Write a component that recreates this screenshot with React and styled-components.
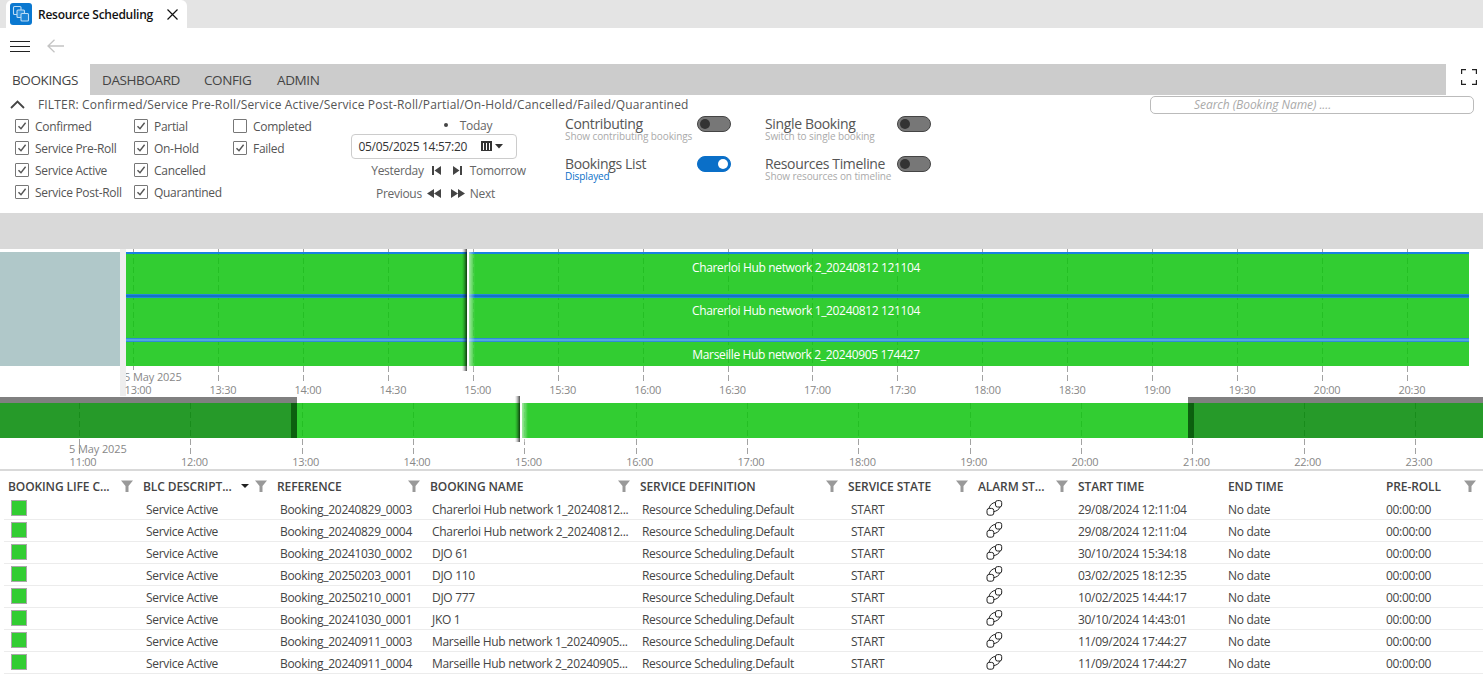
import styled, { createGlobalStyle } from 'styled-components'

const GlobalStyle = createGlobalStyle`
    html, body {
        margin: 0;
        padding: 0;
        background: white;
        overflow: hidden;
    }
    body {
        font-family: "Open Sans", "Noto Sans", sans-serif;
        color: #444;
    }
`

const Page = styled.div`
    width: 1483px;
    height: 695px;
    overflow: hidden;
    display: flex;
    flex-direction: column;
`

const TabStrip = styled.div`
    height: 28px;
    background: #e4e4e4;
    padding-left: 6px;
    display: flex;
`

const WindowTab = styled.div`
    width: 181px;
    height: 28px;
    box-sizing: border-box;
    background: white;
    border-radius: 6px 6px 0 0;
    padding-left: 4px;
    display: flex;
    align-items: center;
    font-size: 12px;
    font-weight: 600;
    letter-spacing: -0.25px;
    color: #111;

    svg { flex: none; }
    span { margin-left: 6px; width: 129px; white-space: nowrap; }
`

const Toolbar = styled.div`
    height: 36px;
    padding-left: 10px;
    display: flex;
    align-items: center;
    gap: 17px;
`

const MenuTabs = styled.div`
    height: 31px;
    display: flex;
    align-items: stretch;
`

const MenuBar = styled.div`
    width: 1356px;
    background: #cccccc;
    display: flex;
`

const MenuTab = styled.div`
    display: flex;
    align-items: center;
    font-size: 13.5px;
    letter-spacing: -0.4px;
    color: #444;
    padding-left: ${p => p.$pad}px;
    width: ${p => p.$width}px;
    box-sizing: border-box;
`

const FullscreenButton = styled.div`
    margin-left: 15px;
    padding-top: 5px;
    display: flex;
    align-items: flex-start;
`

const FilterPanel = styled.div`
    height: 118px;
    box-sizing: border-box;
    display: flex;
    flex-direction: column;
`

const FilterLine = styled.div`
    height: 20px;
    display: flex;
    align-items: flex-start;
    padding-left: 10px;
    font-size: 12px;
    letter-spacing: 0.16px;
    color: #555;

    > svg { margin-top: 5px; flex: none; }
`

const FilterText = styled.span`
    margin-left: 13px;
    margin-top: 1px;
    width: 1112px;
    flex: none;
`

const SearchBox = styled.div`
    width: 324px;
    height: 18px;
    margin-top: 1px;
    box-sizing: border-box;
    border: 1px solid #bbb;
    border-radius: 5px;
    padding-left: 43px;
    font-size: 12px;
    line-height: 16px;
    font-style: italic;
    letter-spacing: -0.05px;
    color: #aaa;
`

const Controls = styled.div`
    display: flex;
    padding-left: 15px;
`

const CheckGrid = styled.div`
    width: 335px;
    display: grid;
    grid-template-columns: 119px 99px auto;
    grid-template-rows: repeat(4, 22px);
    grid-auto-flow: column;
`

const CheckItem = styled.label`
    display: flex;
    align-items: center;
    gap: 6px;
    font-size: 12px;
    letter-spacing: -0.3px;
    color: #555;
`

const CheckBox = styled.span`
    width: 14px;
    height: 14px;
    box-sizing: border-box;
    border: 1px solid #777;
    border-radius: 1px;
    display: flex;
    align-items: center;
    justify-content: center;
`

const DateColumn = styled.div`
    width: 167px;
    padding-top: 1px;
    display: flex;
    flex-direction: column;
    align-items: center;
    font-size: 12px;
    letter-spacing: -0.3px;
    color: #666;
`

const TodayRow = styled.div`
    height: 18px;
    display: flex;
    align-items: center;
    gap: 12px;
    margin-left: 69px;
`

const Dot = styled.span`
    width: 4px;
    height: 4px;
    border-radius: 50%;
    background: #444;
`

const DateInput = styled.div`
    width: 166px;
    height: 25px;
    box-sizing: border-box;
    border: 1px solid #ccc;
    border-radius: 4px;
    padding: 0 13px 0 7px;
    display: flex;
    align-items: center;
    justify-content: space-between;
    color: #333;
`

const NavRow = styled.div`
    height: 23px;
    display: flex;
    align-items: center;
    gap: ${p => p.$gap}px;
    margin-left: ${p => p.$left}px;
`

const NavIcons = styled.span`
    display: flex;
    align-items: center;
    gap: ${p => p.$gap}px;
`

const ToggleGrid = styled.div`
    margin-left: 48px;
    margin-top: 2px;
    display: grid;
    grid-template-columns: 200px 200px;
    grid-template-rows: 40px 40px;
`

const ToggleBlock = styled.div`
    display: flex;
    align-items: flex-start;
`

const ToggleText = styled.div`
    width: 132px;
    flex: none;
`

const ToggleTitle = styled.div`
    font-size: 14px;
    line-height: 14px;
    letter-spacing: -0.35px;
    color: #555;
`

const ToggleHint = styled.div`
    font-size: 10px;
    line-height: 10px;
    letter-spacing: -0.1px;
    white-space: nowrap;
    color: ${p => (p.$on ? '#0a6fc8' : '#aaa')};
`

const Toggle = styled.div`
    width: 34px;
    height: 16px;
    margin-top: -1px;
    box-sizing: border-box;
    border-radius: 8px;
    border: 1.5px solid ${p => (p.$on ? '#0a6fc8' : '#444')};
    background: ${p => (p.$on ? '#0a6fc8' : '#777')};
    display: flex;
    align-items: center;
    justify-content: ${p => (p.$on ? 'flex-end' : 'flex-start')};
    padding: 0 2px;

    &::after {
        content: '';
        width: 10px;
        height: 10px;
        border-radius: 50%;
        background: ${p => (p.$on ? 'white' : '#333')};
    }
`

const GreyBand = styled.div`
    height: 36px;
    background: #d9d9d9;
`

const MainTimeline = styled.div`
    position: relative;
    height: 147px;
    display: flex;
    overflow: hidden;
`

const LeftColumn = styled.div`
    width: 120px;
    padding-top: 3px;
    flex: none;
`

const ResourcePanel = styled.div`
    height: 114px;
    background: #b0c8c9;
`

const Gutter = styled.div`
    width: 6px;
    flex: none;
    background: #eeeeee;
`

/* bars sit above the ticks and let them show through a little */
const Tracks = styled.div`
    position: relative;
    z-index: 1;
    width: 1343px;
    padding-top: 3px;
    flex: none;
`

const TrackRow = styled.div`
    height: ${p => p.$height}px;
    background: rgba(14, 196, 14, 0.85);
    text-align: center;
    font-size: 12px;
    line-height: 16px;
    letter-spacing: -0.35px;
    color: white;
`

const TrackLine = styled.div`
    height: ${p => p.$height}px;
    background: ${p => p.$fill};
`

const TrackLabel = styled.div`
    padding: ${p => p.$pad}px 0 0 17px;
`

const Tick = styled.div`
    position: absolute;
    top: ${p => p.$top}px;
    height: ${p => p.$height}px;
    width: 1px;
    background: repeating-linear-gradient(to bottom, rgba(70, 70, 70, 0.5) 0, rgba(70, 70, 70, 0.5) 6px, transparent 6px, transparent 9px);
`

const AxisLabel = styled.div`
    position: absolute;
    z-index: 1;
    top: ${p => p.$top}px;
    transform: translateX(-50%);
    font-size: 11px;
    line-height: 14px;
    letter-spacing: -0.25px;
    color: #888;
`

const DateLabel = styled.div`
    position: absolute;
    z-index: 1;
    top: ${p => p.$top}px;
    font-size: 11px;
    line-height: 14px;
    letter-spacing: -0.1px;
    color: #888;
    white-space: nowrap;
`

const ClippedDate = styled.div`
    position: absolute;
    z-index: 1;
    left: 126px;
    top: 121px;
    width: 80px;
    height: 26px;
    overflow: hidden;
    background: white;
`

const ClippedText = styled.div`
    margin-left: -2px;
    font-size: 11px;
    line-height: 14px;
    letter-spacing: -0.1px;
    color: #888;
    white-space: nowrap;
`

const Marker = styled.div`
    position: absolute;
    z-index: 2;
    top: 0;
    left: ${p => p.$left}px;
    height: ${p => p.$height}px;
    width: 13px;
    background: linear-gradient(to right, rgba(0, 0, 0, 0) 0, rgba(0, 0, 0, 0.2) 2px, rgba(0, 0, 0, 0.7) 5px, #fff 5px, #fff 7px, rgba(255, 255, 255, 0.55) 7px, rgba(255, 255, 255, 0) 13px);
`

const Overview = styled.div`
    position: relative;
    height: 73px;
    border-bottom: 2px solid #d9d9d9;
    overflow: hidden;
`

const OverviewBar = styled.div`
    position: absolute;
    z-index: 1;
    top: 7px;
    left: 297px;
    width: 891px;
    height: 35px;
    background: rgba(14, 196, 14, 0.85);
`

const Shade = styled.div`
    position: absolute;
    z-index: 1;
    top: 1px;
    height: 41px;
    box-sizing: border-box;
    border-top: 6px solid #808080;
    background: rgba(0, 136, 3, 0.85);
    ${p => (p.$side === 'left' ? 'left: 0; width: 297px;' : 'right: 0; width: 295px;')}

    &::after {
        content: '';
        position: absolute;
        top: 0;
        bottom: 0;
        width: 6px;
        background: rgba(10, 90, 12, 0.9);
        ${p => (p.$side === 'left' ? 'right: 0;' : 'left: 0;')}
    }
`

const Table = styled.div`
    flex: 1;
`

const HeaderRow = styled.div`
    height: 27px;
    box-sizing: border-box;
    padding: 3px 0 0 8px;
    display: grid;
    grid-template-columns: 135px 134px 153px 210px 208px 130px 100px 150px 158px 97px;
    align-items: center;
`

const HeaderCell = styled.div`
    display: flex;
    align-items: center;
    padding-right: ${p => p.$right ?? 10}px;
    font-size: 12px;
    font-weight: 600;
    letter-spacing: -0.1px;
    color: #444;
    white-space: nowrap;

    span { flex: 1; }
    svg { flex: none; }
`

const SortCaret = styled.i`
    width: 0;
    height: 0;
    margin-right: 6px;
    border-left: 4px solid transparent;
    border-right: 4px solid transparent;
    border-top: 4px solid #222;
`

const Row = styled.div`
    height: 22px;
    box-sizing: border-box;
    margin-left: 4px;
    padding: 1px 0 0 7px;
    border-bottom: 1.5px solid #ececec;
    display: grid;
    grid-template-columns: 135px 134px 152px 210px 209px 130px 97px 150px 158px 97px;
    align-items: center;
    font-size: 12px;
    letter-spacing: -0.3px;
    color: #444;
    white-space: nowrap;
`

const Swatch = styled.span`
    display: block;
    width: 16px;
    height: 16px;
    margin-top: -2px;
    box-sizing: border-box;
    background: #32cd32;
    border: 1px solid #a8a8a8;
`

const LinkCell = styled.span`
    padding-left: 4px;
    margin-top: -2px;
    display: flex;
`

const CheckMark = () => (
    <svg width="10" height="10" viewBox="0 0 10 10" fill="none">
        <path d="M1.5 5.2 L4 7.8 L8.6 1.8" stroke="#555" strokeWidth="1.4" />
    </svg>
)

const FilterIcon = () => (
    <svg width="12" height="12" viewBox="0 0 12 12">
        <path d="M0 0.5 H12 L7.5 6 V12 H4.5 V6 Z" fill="#999" />
    </svg>
)

const ChainIcon = () => (
    <svg width="18" height="16" viewBox="0 0 18 16" fill="none" stroke="#222" strokeWidth="1">
        <rect x="10.5" y="0.6" width="6.2" height="6.4" rx="2" />
        <rect x="2" y="8.4" width="6.8" height="6.8" rx="2.2" />
        <path d="M4 8.4 C4.6 5.2 7.4 2.6 10.5 2.4" />
        <path d="M8.8 11.6 C11.6 11.2 14.2 9.4 15 7" />
    </svg>
)

const AppLogo = () => (
    <svg width="22" height="22" viewBox="0 0 22 22" fill="none" stroke="#bcdcf5" strokeWidth="1.1">
        <rect width="22" height="22" rx="3" fill="#0a78d0" stroke="none" />
        <rect x="3.5" y="3.5" width="7.5" height="8" rx="1" fill="#0a78d0" />
        <rect x="7" y="7" width="7.5" height="7.5" rx="1" fill="#2f90dc" />
        <rect x="11" y="10.5" width="7.5" height="7.5" rx="1" fill="#1c84d6" />
    </svg>
)

const CloseIcon = () => (
    <svg width="11" height="11" viewBox="0 0 11 11" stroke="#111" strokeWidth="1.2">
        <path d="M0.5 0.5 L10.5 10.5 M10.5 0.5 L0.5 10.5" />
    </svg>
)

const MenuIcon = () => (
    <svg width="20" height="11" viewBox="0 0 20 11" stroke="#222" strokeWidth="1">
        <path d="M0 0.5 H20 M0 5.5 H20 M0 10.5 H20" />
    </svg>
)

const BackIcon = () => (
    <svg width="17" height="14" viewBox="0 0 17 14" fill="none" stroke="#c4c4c4" strokeWidth="1.3">
        <path d="M17 7 H1 M7.5 0.8 L1 7 L7.5 13.2" />
    </svg>
)

const FullscreenIcon = () => (
    <svg width="16" height="16" viewBox="0 0 16 16" fill="none" stroke="#222" strokeWidth="1.2">
        <path d="M0.6 5 V0.6 H5 M11 0.6 H15.4 V5 M15.4 11 V15.4 H11 M5 15.4 H0.6 V11" />
    </svg>
)

const Chevron = () => (
    <svg width="15" height="9" viewBox="0 0 15 9" fill="none" stroke="#444" strokeWidth="1.8">
        <path d="M1 8 L7.5 1.5 L14 8" />
    </svg>
)

const CalendarIcon = () => (
    <svg width="22" height="11" viewBox="0 0 22 11">
        <path d="M0 0 H11 V10 H0 Z M2 2 V9 H3 V2 Z M5 2 V9 H6 V2 Z M8 2 V9 H9 V2 Z" fill="#333" fillRule="evenodd" />
        <path d="M14 3 H22 L18 7.5 Z" fill="#333" />
    </svg>
)

const StepIcon = ({ flip }) => (
    <svg width="9" height="9" viewBox="0 0 9 9" transform={flip ? 'scale(-1 1)' : undefined}>
        <path d="M0 0 H2 V9 H0 Z M9 0 V9 L2.5 4.5 Z" fill="#444" />
    </svg>
)

const SkipIcon = ({ flip }) => (
    <svg width="14" height="9" viewBox="0 0 14 9" transform={flip ? 'scale(-1 1)' : undefined}>
        <path d="M7 0 V9 L0 4.5 Z M14 0 V9 L7 4.5 Z" fill="#444" />
    </svg>
)

const checks = [
    ['Confirmed', true], ['Service Pre-Roll', true], ['Service Active', true], ['Service Post-Roll', true],
    ['Partial', true], ['On-Hold', true], ['Cancelled', true], ['Quarantined', true],
    ['Completed', false], ['Failed', true],
]

const toggles = [
    { title: 'Contributing', hint: 'Show contributing bookings' },
    { title: 'Single Booking', hint: 'Switch to single booking' },
    { title: 'Bookings List', hint: 'Displayed', on: true },
    { title: 'Resources Timeline', hint: 'Show resources on timeline' },
]

const tracks = [
    { name: 'Charerloi Hub network 2_20240812 121104', height: 42, lineHeight: 2, pad: 6, fill: '#1a80e0' },
    { name: 'Charerloi Hub network 1_20240812 121104', height: 44, lineHeight: 4, pad: 5, fill: 'linear-gradient(#2a92e6, #0c68bc 50%, #2a92e6)' },
    { name: 'Marseille Hub network 2_20240905 174427', height: 28, lineHeight: 4, pad: 5, fill: 'linear-gradient(#1d7fd0, #62b2ea 50%, #1d7fd0)' },
]

const mainTimes = ['13:00', '13:30', '14:00', '14:30', '15:00', '15:30', '16:00', '16:30', '17:00', '17:30', '18:00', '18:30', '19:00', '19:30', '20:00', '20:30']
const overviewTimes = ['11:00', '12:00', '13:00', '14:00', '15:00', '16:00', '17:00', '18:00', '19:00', '20:00', '21:00', '22:00', '23:00']

const headers = [
    { label: 'BOOKING LIFE C...', filter: true },
    { label: 'BLC DESCRIPT...', filter: true, sorted: true },
    { label: 'REFERENCE', filter: true },
    { label: 'BOOKING NAME', filter: true },
    { label: 'SERVICE DEFINITION', filter: true },
    { label: 'SERVICE STATE', filter: true },
    { label: 'ALARM ST...', filter: true },
    { label: 'START TIME' },
    { label: 'END TIME' },
    { label: 'PRE-ROLL', filter: true, right: 7 },
]

const rows = [
    ['Booking_20240829_0003', 'Charerloi Hub network 1_20240812...', '29/08/2024 12:11:04'],
    ['Booking_20240829_0004', 'Charerloi Hub network 2_20240812...', '29/08/2024 12:11:04'],
    ['Booking_20241030_0002', 'DJO 61', '30/10/2024 15:34:18'],
    ['Booking_20250203_0001', 'DJO 110', '03/02/2025 18:12:35'],
    ['Booking_20250210_0001', 'DJO 777', '10/02/2025 14:44:17'],
    ['Booking_20241030_0001', 'JKO 1', '30/10/2024 14:43:01'],
    ['Booking_20240911_0003', 'Marseille Hub network 1_20240905...', '11/09/2024 17:44:27'],
    ['Booking_20240911_0004', 'Marseille Hub network 2_20240905...', '11/09/2024 17:44:27'],
]

function App () {
    return (
        <Page>
            <GlobalStyle />
            <TabStrip>
                <WindowTab>
                    <AppLogo />
                    <span>Resource Scheduling</span>
                    <CloseIcon />
                </WindowTab>
            </TabStrip>
            <Toolbar>
                <MenuIcon />
                <BackIcon />
            </Toolbar>
            <MenuTabs>
                <MenuTab $pad={12} $width={90}>BOOKINGS</MenuTab>
                <MenuBar>
                    <MenuTab $pad={12} $width={114}>DASHBOARD</MenuTab>
                    <MenuTab $pad={0} $width={73}>CONFIG</MenuTab>
                    <MenuTab $pad={0} $width={80}>ADMIN</MenuTab>
                </MenuBar>
                <FullscreenButton><FullscreenIcon /></FullscreenButton>
            </MenuTabs>
            <FilterPanel>
                <FilterLine>
                    <Chevron />
                    <FilterText>FILTER: Confirmed/Service Pre-Roll/Service Active/Service Post-Roll/Partial/On-Hold/Cancelled/Failed/Quarantined</FilterText>
                    <SearchBox>Search (Booking Name) ....</SearchBox>
                </FilterLine>
                <Controls>
                    <CheckGrid>
                        {checks.map(([label, checked]) => (
                            <CheckItem key={label}>
                                <CheckBox>{checked && <CheckMark />}</CheckBox>
                                {label}
                            </CheckItem>
                        ))}
                    </CheckGrid>
                    <DateColumn>
                        <TodayRow><Dot />Today</TodayRow>
                        <DateInput>05/05/2025 14:57:20<CalendarIcon /></DateInput>
                        <NavRow $gap={8} $left={30}>
                            Yesterday
                            <NavIcons $gap={12}><StepIcon /><StepIcon flip /></NavIcons>
                            Tomorrow
                        </NavRow>
                        <NavRow $gap={5} $left={4}>
                            Previous
                            <NavIcons $gap={10}><SkipIcon /><SkipIcon flip /></NavIcons>
                            Next
                        </NavRow>
                    </DateColumn>
                    <ToggleGrid>
                        {toggles.map(t => (
                            <ToggleBlock key={t.title}>
                                <ToggleText>
                                    <ToggleTitle>{t.title}</ToggleTitle>
                                    <ToggleHint $on={t.on}>{t.hint}</ToggleHint>
                                </ToggleText>
                                <Toggle $on={t.on} />
                            </ToggleBlock>
                        ))}
                    </ToggleGrid>
                </Controls>
            </FilterPanel>
            <GreyBand />
            <MainTimeline>
                <LeftColumn><ResourcePanel /></LeftColumn>
                <Gutter />
                <Tracks>
                    {tracks.map(t => (
                        <TrackRow key={t.name} $height={t.height}>
                            <TrackLine $height={t.lineHeight} $fill={t.fill} />
                            <TrackLabel $pad={t.pad}>{t.name}</TrackLabel>
                        </TrackRow>
                    ))}
                </Tracks>
                <ClippedDate><ClippedText>5 May 2025</ClippedText></ClippedDate>
                {mainTimes.map((time, i) => {
                    const x = 133 + i * 84.93
                    return (
                        <div key={time}>
                            <Tick $top={0} $height={134} style={{ left: x }} />
                            <AxisLabel $top={134} style={{ left: x + 5 }}>{time}</AxisLabel>
                        </div>
                    )
                })}
                <Marker $left={462} $height={122} />
            </MainTimeline>
            <Overview>
                <OverviewBar />
                <Shade $side="left" />
                <Shade $side="right" />
                <DateLabel $top={46} style={{ left: 69 }}>5 May 2025</DateLabel>
                {overviewTimes.map((time, i) => {
                    const x = 79 + i * 111.33
                    return (
                        <div key={time}>
                            <Tick $top={7} $height={52} style={{ left: x }} />
                            <AxisLabel $top={59} style={{ left: x + 4 }}>{time}</AxisLabel>
                        </div>
                    )
                })}
                <Marker $left={515} $height={46} />
            </Overview>
            <Table>
                <HeaderRow>
                    {headers.map(h => (
                        <HeaderCell key={h.label} $right={h.right}>
                            <span>{h.label}</span>
                            {h.sorted && <SortCaret />}
                            {h.filter && <FilterIcon />}
                        </HeaderCell>
                    ))}
                </HeaderRow>
                {rows.map(([reference, name, start]) => (
                    <Row key={reference}>
                        <Swatch />
                        <span>Service Active</span>
                        <span>{reference}</span>
                        <span>{name}</span>
                        <span>Resource Scheduling.Default</span>
                        <span>START</span>
                        <LinkCell><ChainIcon /></LinkCell>
                        <span>{start}</span>
                        <span>No date</span>
                        <span>00:00:00</span>
                    </Row>
                ))}
            </Table>
        </Page>
    )
}

export default App
